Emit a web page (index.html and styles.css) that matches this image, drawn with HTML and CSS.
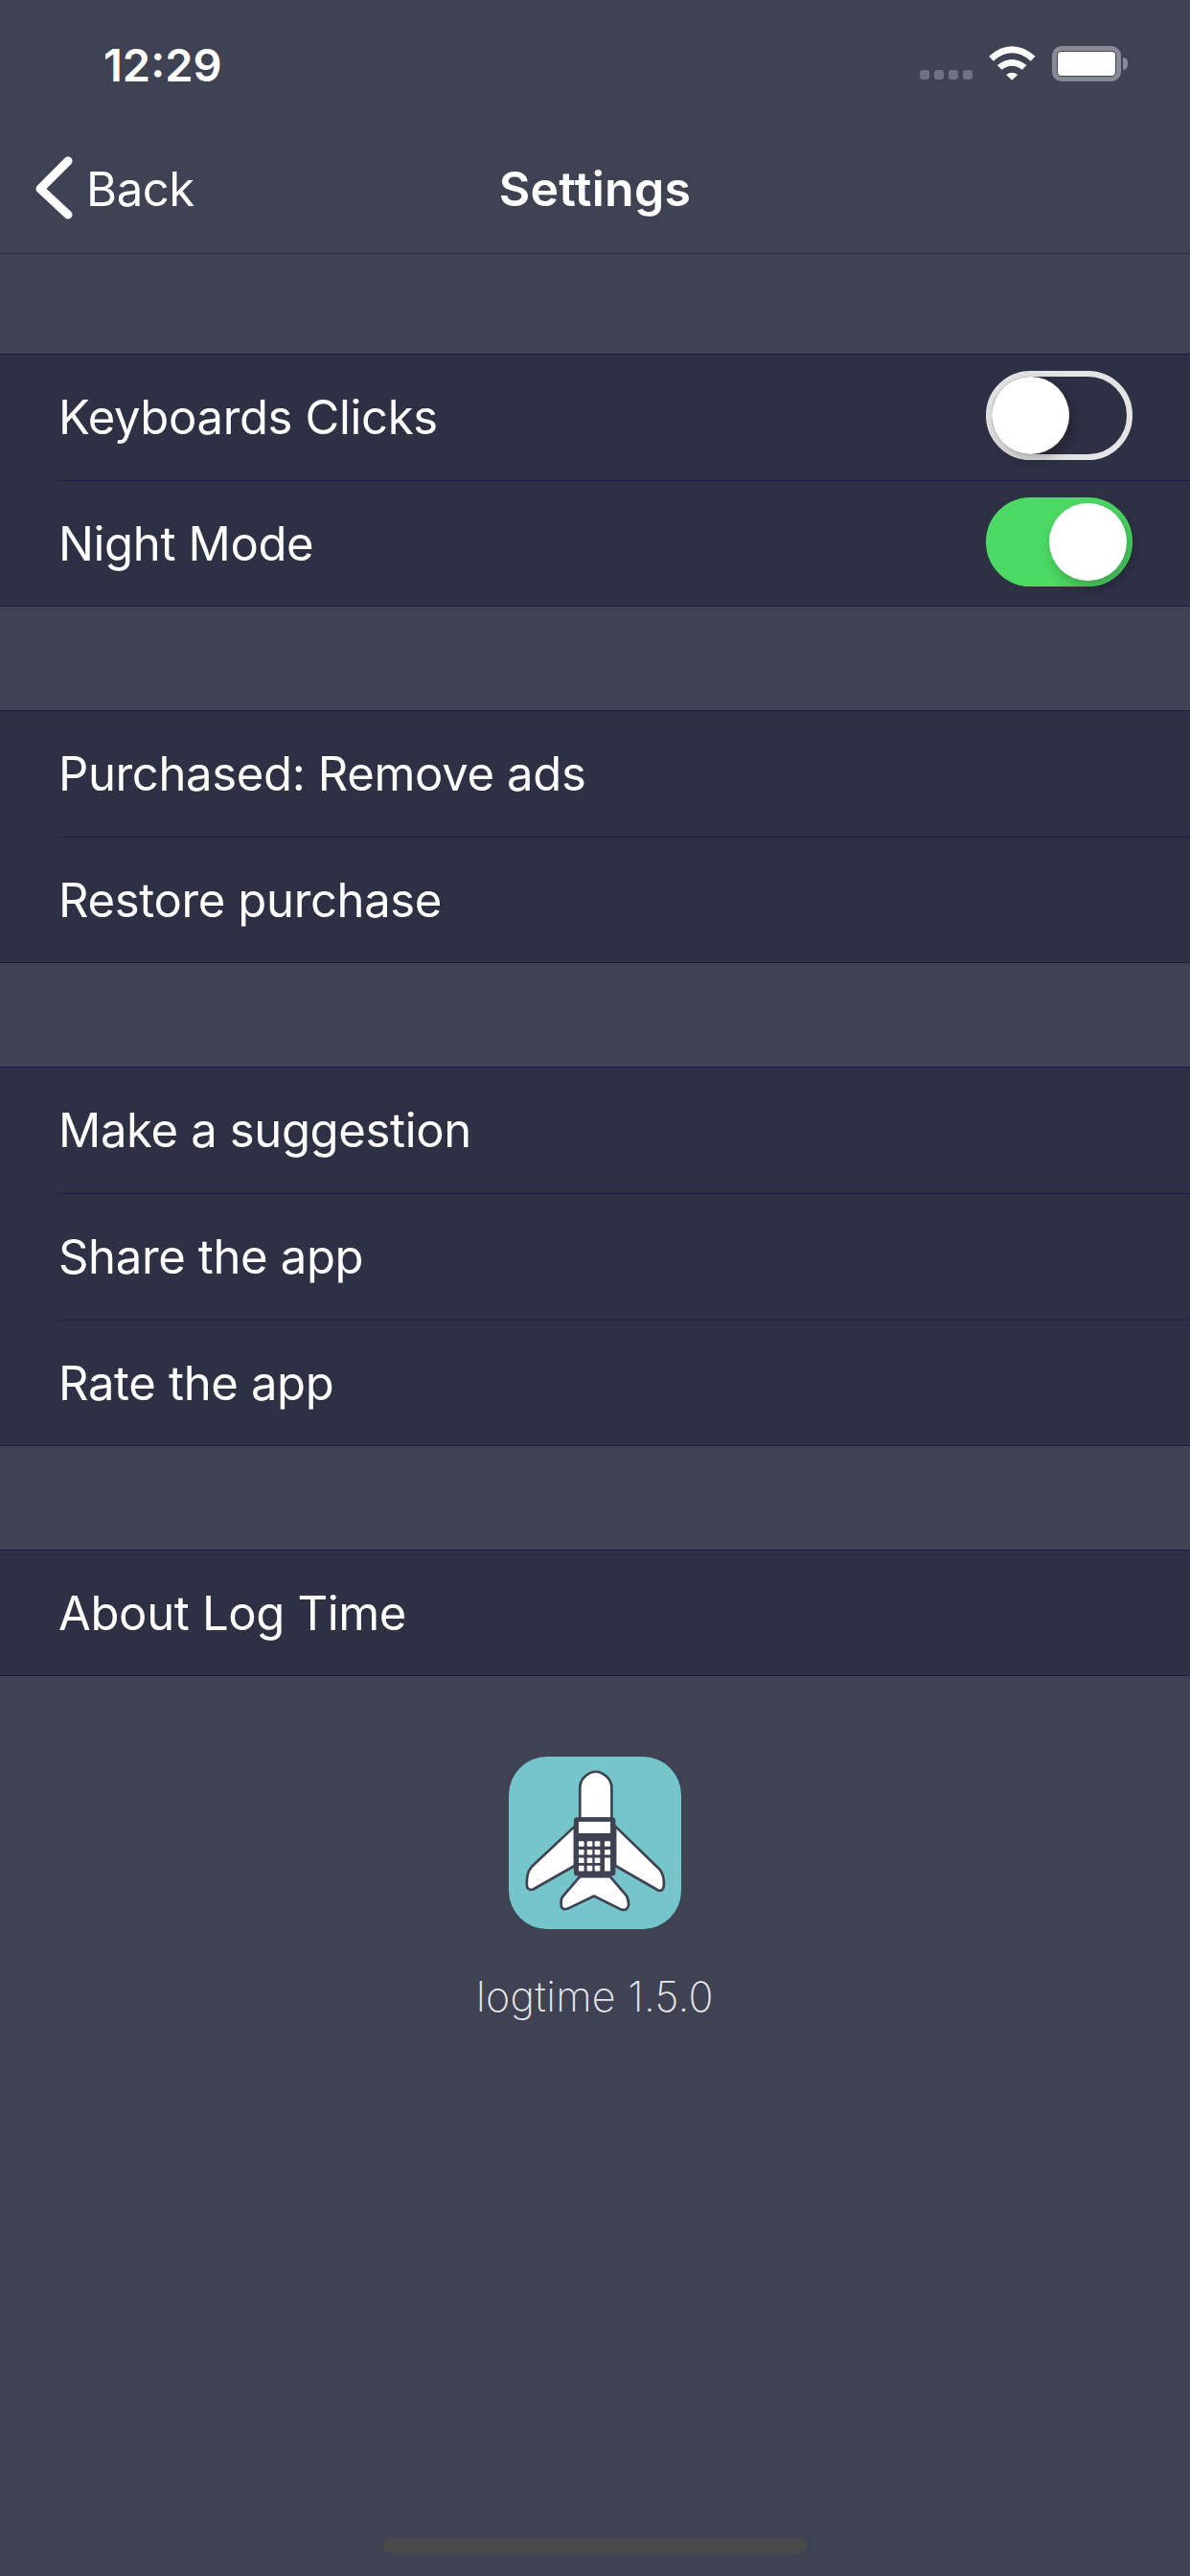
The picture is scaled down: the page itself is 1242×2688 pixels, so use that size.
FILE: index.html
```html
<!DOCTYPE html>
<html lang="en">
<head>
<meta charset="UTF-8">
<title>Settings</title>
<link rel="stylesheet" href="styles.css">
</head>
<body>

<div class="screen">
  <div class="status-bar">
    <span class="time">12:29</span>
    <div class="status-icons">
      <div class="signal"><i></i><i></i><i></i><i></i></div>
      <svg class="wifi" viewBox="277 88 146 108">
        <path d="M277 120Q349 58 422 120L408 135Q349 85 291 135Z"/>
        <path d="M303 148Q349 112 395 148L381 162Q349 138 317 162Z"/>
        <path d="M331 178Q349 164 367 178L349 195Z"/>
      </svg>
      <div class="battery"><div class="battery-level"></div></div>
      <div class="battery-nub"></div>
    </div>
  </div>

  <div class="nav-bar">
    <div class="back">
      <svg class="chevron" viewBox="0 0 40 70">
        <path d="M34 6L5 35L34 62"/>
      </svg>
      <span>Back</span>
    </div>
    <h1>Settings</h1>
    <div></div>
  </div>

  <div class="section">
    <div class="row">
      <span>Keyboards Clicks</span>
      <div class="switch"><div class="knob"></div></div>
    </div>
    <div class="row">
      <span>Night Mode</span>
      <div class="switch on"><div class="knob"></div></div>
    </div>
  </div>

  <div class="section">
    <div class="row"><span>Purchased: Remove ads</span></div>
    <div class="row"><span>Restore purchase</span></div>
  </div>

  <div class="section">
    <div class="row"><span>Make a suggestion</span></div>
    <div class="row"><span>Share the app</span></div>
    <div class="row"><span>Rate the app</span></div>
  </div>

  <div class="section">
    <div class="row"><span>About Log Time</span></div>
  </div>

  <div class="about">
    <svg class="app-icon" viewBox="94 68 538 538">
      <rect x="94" y="68" width="538" height="538" rx="120" fill="#75c6ca"/>
      <g fill="#fff" stroke="#3f4252" stroke-width="8" stroke-linejoin="round">
        <path d="M316 262V165C316 135 345 115 365 115C385 115 415 135 415 165V262Z"/>
        <path d="M300 285L165 412Q150 428 150 465Q150 488 170 482L300 408Z"/>
        <path d="M426 285L565 420Q578 435 578 465Q578 490 560 485L426 408Z"/>
        <path d="M316 442L262 505Q255 515 258 535Q262 548 278 542L360 503L445 545Q465 550 468 530Q468 512 460 500L410 442Z"/>
      </g>
      <rect x="297" y="257" width="130" height="183" rx="10" fill="#3f4252"/>
      <g fill="#fff">
        <rect x="312" y="271" width="99" height="36"/>
        <rect x="312" y="332" width="17" height="16" rx="2"/>
        <rect x="338" y="332" width="17" height="16" rx="2"/>
        <rect x="362" y="332" width="17" height="16" rx="2"/>
        <rect x="393" y="332" width="18" height="16" rx="2"/>
        <rect x="312" y="358" width="17" height="16" rx="2"/>
        <rect x="338" y="358" width="17" height="16" rx="2"/>
        <rect x="362" y="358" width="17" height="16" rx="2"/>
        <rect x="393" y="358" width="18" height="16" rx="2"/>
        <rect x="312" y="383" width="17" height="17" rx="2"/>
        <rect x="338" y="383" width="17" height="17" rx="2"/>
        <rect x="362" y="383" width="17" height="17" rx="2"/>
        <rect x="393" y="383" width="18" height="42" rx="2"/>
        <rect x="312" y="408" width="17" height="17" rx="2"/>
        <rect x="338" y="408" width="17" height="17" rx="2"/>
        <rect x="362" y="408" width="17" height="17" rx="2"/>
      </g>
    </svg>
    <p class="version">logtime 1.5.0</p>
  </div>

  <div class="home-indicator"></div>
</div>

</body>
</html>
```

FILE: styles.css
```css
body {
  margin: 0;
  padding: 0;
  background-color: #3f4252;
  font-family: Inter, "Noto Sans", sans-serif;
  color: #fff;
}
.screen {
  width: 1242px;
  height: 2688px;
  display: flex;
  flex-direction: column;
  overflow: hidden;
}
.status-bar {
  height: 132px;
  box-sizing: border-box;
  padding: 3px 65px 0 108px;
  display: flex;
  justify-content: space-between;
  align-items: center;
}
.time {
  font-size: 47px;
  font-weight: 600;
}
.status-icons {
  display: flex;
  align-items: center;
  margin-bottom: 3px;
}
.signal {
  display: flex;
  gap: 5px;
  margin-top: 24px;
  margin-right: 17px;
}
.signal i {
  width: 10px;
  height: 10px;
  border-radius: 3px;
  background-color: #6f7280;
}
.wifi {
  width: 49px;
  height: 36px;
  margin-right: 17px;
  fill: #fff;
}
.battery {
  width: 72px;
  height: 37px;
  box-sizing: border-box;
  border: 5px solid #888b96;
  border-radius: 10px;
  padding: 1px;
}
.battery-level {
  height: 100%;
  background-color: #fff;
  border-radius: 4px;
}
.battery-nub {
  width: 5px;
  height: 13px;
  margin-left: 2px;
  background-color: #888b96;
  border-radius: 0 6px 6px 0;
}
.nav-bar {
  height: 133px;
  box-sizing: border-box;
  border-bottom: 1px solid #2c2d38;
  display: grid;
  grid-template-columns: 1fr auto 1fr;
  align-items: center;
  padding-bottom: 2px;
}
.back {
  display: flex;
  align-items: center;
  gap: 13px;
  padding-left: 37px;
  font-size: 49px;
  letter-spacing: -0.4px;
}
.chevron {
  width: 40px;
  height: 70px;
  fill: none;
  stroke: #fff;
  stroke-width: 9;
  stroke-linecap: round;
  stroke-linejoin: round;
}
h1 {
  margin: 0;
  font-size: 50px;
  font-weight: 600;
  letter-spacing: 0.3px;
}
.section {
  margin-top: 108px;
  background-color: #2e3044;
  box-shadow: inset 0 1px #1a1e48, inset 0 -1px #1a1e48;
}
.nav-bar + .section {
  margin-top: 104px;
}
.row {
  height: 132px;
  box-sizing: border-box;
  margin-left: 61px;
  padding-right: 60px;
  display: flex;
  justify-content: space-between;
  align-items: center;
  font-size: 49px;
  letter-spacing: -0.35px;
}
.row + .row {
  box-shadow: inset 0 1px #1a1e48;
}
.switch {
  width: 153px;
  height: 93px;
  box-sizing: border-box;
  border: 6px solid #e4e4e4;
  border-radius: 47px;
  display: flex;
  margin-bottom: 3px;
}
.knob {
  width: 81px;
  height: 81px;
  border-radius: 50%;
  background-color: #fff;
  box-shadow: 4px 6px 14px rgba(0, 0, 0, 0.25);
}
.switch.on {
  background-color: #4cd964;
  border-color: #4cd964;
  justify-content: flex-end;
}
.about {
  display: flex;
  flex-direction: column;
  align-items: center;
  padding-top: 84px;
}
.app-icon {
  width: 180px;
  height: 180px;
}
.version {
  margin: 44px 0 0;
  font-size: 43px;
  font-weight: 200;
  letter-spacing: 0.3px;
  color: #e8e9ec;
}
.home-indicator {
  position: absolute;
  left: 399px;
  top: 2649px;
  width: 443px;
  height: 15px;
  border-radius: 8px;
  background-color: #4a4a4a;
}
```
